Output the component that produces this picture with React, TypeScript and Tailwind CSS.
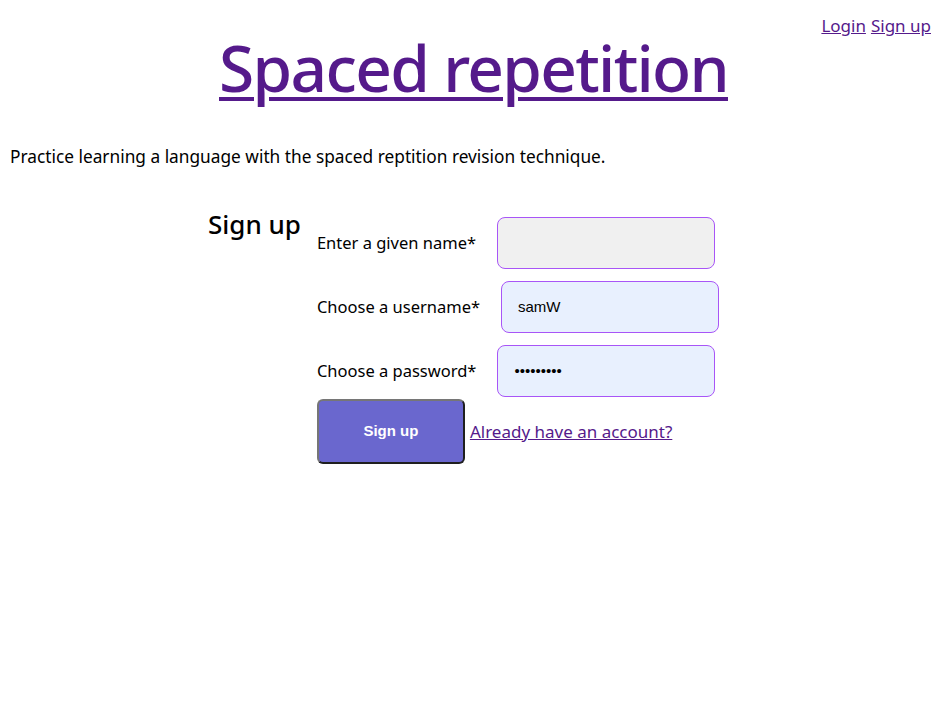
import React from "react";

function TopNav() {
  return (
    <nav className="flex justify-end gap-[5px] pr-2 pt-[13px] text-[17px]">
      <a href="#" className="text-[#551a8b] underline">
        Login
      </a>
      <a href="#" className="text-[#551a8b] underline">
        Sign up
      </a>
    </nav>
  );
}

type FieldProps = {
  label: string;
  type?: string;
  value?: string;
  filled?: boolean;
};

function Field({ label, type = "text", value, filled }: FieldProps) {
  return (
    <div className="flex items-center gap-[21px]">
      <label className="text-[16.5px] text-black">{label}</label>
      <input
        type={type}
        defaultValue={value}
        className={
          "h-[52px] w-[218px] rounded-lg border border-[#a855f7] px-4 font-['Liberation_Sans',Arial,sans-serif] text-[15px] text-black outline-none " +
          (filled ? "bg-[#e8f0fe]" : "bg-[#f0f0f0]")
        }
      />
    </div>
  );
}

export default function App() {
  return (
    <div className="min-h-screen bg-white font-['Noto_Sans',sans-serif] text-black">
      <header className="grid grid-cols-[1fr_auto_1fr]">
        <div />
        <h1 className="mt-[28px] pl-[8px] text-[64px] leading-[80px] font-medium tracking-[-1.7px] text-[#551a8b] underline decoration-[4px] underline-offset-[5px]">
          <a href="#">Spaced repetition</a>
        </h1>
        <TopNav />
      </header>

      <p className="mt-[36px] pl-[10px] text-[17.3px]">
        Practice learning a language with the spaced reptition revision
        technique.
      </p>

      <section className="mt-[36px] flex justify-center gap-[16px] pr-[12px]">
        <h2 className="mt-[-1px] text-[26px] font-medium">Sign up</h2>
        <form className="mt-[11px] flex flex-col gap-[12px]">
          <Field label="Enter a given name*" />
          <Field label="Choose a username*" value="samW" filled />
          <Field label="Choose a password*" type="password" value="samwsamw1" filled />
          <div className="mt-[-10px] flex items-center gap-[5px]">
            <button
              type="button"
              className="h-[65px] w-[148px] rounded-md border-2 border-t-[#767676] border-l-[#767676] border-r-[#1f1f1f] border-b-[#1f1f1f] bg-[#6a67ce] font-['Liberation_Sans',Arial,sans-serif] text-[15px] font-bold text-white"
            >
              Sign up
            </button>
            <a href="#" className="text-[17px] text-[#551a8b] underline">
              Already have an account?
            </a>
          </div>
        </form>
      </section>
    </div>
  );
}
